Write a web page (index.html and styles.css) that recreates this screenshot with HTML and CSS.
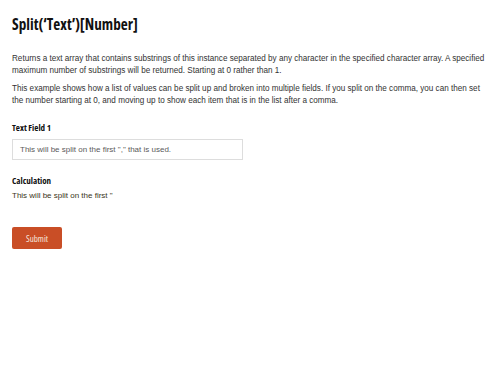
FILE: index.html
```html
<!DOCTYPE html>
<html>
<head>
<meta charset="utf-8">
<link rel="stylesheet" href="styles.css">
</head>
<body>
<div class="page">
  <h1 class="title">Split(‘Text’)[Number]</h1>
  <p class="desc">Returns a text array that contains substrings of this instance separated by any character in the specified character array. A specified maximum number of substrings will be returned. Starting at 0 rather than 1.</p>
  <p class="desc">This example shows how a list of values can be split up and broken into multiple fields. If you split on the comma, you can then set the number starting at 0, and moving up to show each item that is in the list after a comma.</p>
  <div class="field">
    <div class="label">Text Field 1</div>
    <div class="input">This will be split on the first "," that is used.</div>
  </div>
  <div class="field calc">
    <div class="label">Calculation</div>
    <div class="output">This will be split on the first "</div>
  </div>
  <div class="actions">
    <button class="submit">Submit</button>
  </div>
</div>
</body>
</html>
```
FILE: styles.css
```css
html, body {
  margin: 0;
  padding: 0;
  background: #ffffff;
}
.page {
  padding: 12px 12px 0 12px;
  font-family: "Liberation Sans", Arial, sans-serif;
  color: #333333;
}
.title {
  margin: 0;
  font-family: "Open Sans", "Liberation Sans", sans-serif;
  font-stretch: 75%;
  font-weight: 700;
  font-size: 15.2px;
  line-height: 24px;
  color: #111111;
}
.desc {
  margin: 0;
  font-size: 8.15px;
  line-height: 12px;
  color: #333333;
}
.title + .desc {
  margin-top: 17px;
}
.desc + .desc {
  margin-top: 6px;
}
.field {
  margin-top: 14px;
}
.label {
  font-family: "Open Sans", "Liberation Sans", sans-serif;
  font-stretch: 75%;
  font-weight: 700;
  font-size: 9px;
  line-height: 14px;
  color: #111111;
}
.input {
  margin-top: 4px;
  border: 1px solid #dddddd;
  box-sizing: border-box;
  width: 231px;
  height: 21px;
  padding: 0 7px;
  font-size: 8px;
  line-height: 19px;
  color: #5a5a5a;
}
.calc {
  margin-top: 14px;
}
.output {
  margin-top: 2px;
  font-size: 8px;
  line-height: 12px;
  color: #3a3520;
}
.actions {
  margin-top: 25px;
}
.submit {
  width: 50px;
  height: 22px;
  border: none;
  border-radius: 2px;
  background: #c94e26;
  color: #f6e6de;
  font-family: "Open Sans", "Liberation Sans", sans-serif;
  font-stretch: 75%;
  font-size: 9px;
  padding: 0;
}
```
